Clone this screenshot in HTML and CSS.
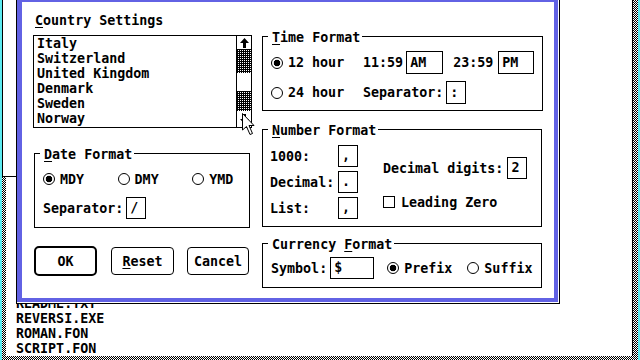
FILE: index.html
```html
<!DOCTYPE html>
<html lang="en">
<head>
    <meta charset="UTF-8">
    <title>Country Settings</title>
    <link rel="stylesheet" href="styles.css">
</head>
<body>
<div class="desktop">
    <div class="exec-window dither">
        <div class="exec-body">
            <div>README.TXT</div>
            <div>REVERSI.EXE</div>
            <div>ROMAN.FON</div>
            <div>SCRIPT.FON</div>
        </div>
    </div>
    <div class="side-window"></div>

    <div class="dialog">
        <div class="dialog-frame">
            <div class="dialog-body">
                <div class="col-left">
                    <div class="dialog-title"><u>C</u>ountry Settings</div>
                    <div class="listbox">
                        <div class="list-items">
                            <div>Italy</div>
                            <div>Switzerland</div>
                            <div>United Kingdom</div>
                            <div>Denmark</div>
                            <div>Sweden</div>
                            <div>Norway</div>
                        </div>
                        <div class="scrollbar">
                            <div class="sb-btn sb-up">
                                <svg width="9" height="10" viewBox="0 0 9 10"><polygon points="4.5,0 9,5 6,5 6,10 3,10 3,5 0,5"/></svg>
                            </div>
                            <div class="sb-track sb-track-top"></div>
                            <div class="sb-thumb"></div>
                            <div class="sb-track sb-track-bottom"></div>
                            <div class="sb-btn sb-down">
                                <svg width="9" height="10" viewBox="0 0 9 10"><polygon points="4.5,10 9,5 6,5 6,0 3,0 3,5 0,5"/></svg>
                            </div>
                        </div>
                    </div>

                    <div class="group date-group">
                        <div class="group-title"><u>D</u>ate Format</div>
                        <div class="group-body">
                            <div class="row date-order">
                                <div class="option"><span class="radio checked"></span>MDY</div>
                                <div class="option"><span class="radio"></span>DMY</div>
                                <div class="option"><span class="radio"></span>YMD</div>
                            </div>
                            <div class="row">
                                <span class="label">Separator:</span>
                                <span class="edit edit-char">/</span>
                            </div>
                        </div>
                    </div>

                    <div class="buttons">
                        <button class="btn btn-default">OK</button>
                        <button class="btn btn-reset"><u>R</u>eset</button>
                        <button class="btn btn-cancel">Cancel</button>
                    </div>
                </div>

                <div class="col-right">
                    <div class="group time-group">
                        <div class="group-title"><u>T</u>ime Format</div>
                        <div class="group-body">
                            <div class="row">
                                <div class="option time-opt"><span class="radio checked"></span>12 hour</div>
                                <span class="label">11:59</span>
                                <span class="edit edit-ampm">AM</span>
                                <span class="label time-24">23:59</span>
                                <span class="edit edit-ampm pm">PM</span>
                            </div>
                            <div class="row">
                                <div class="option time-opt"><span class="radio"></span>24 hour</div>
                                <span class="label">Separator:</span>
                                <span class="edit edit-char">:</span>
                            </div>
                        </div>
                    </div>

                    <div class="group number-group">
                        <div class="group-title"><u>N</u>umber Format</div>
                        <div class="group-body">
                            <div class="number-left">
                                <div class="row"><span class="label num-label">1000:</span><span class="edit edit-char">,</span></div>
                                <div class="row"><span class="label num-label">Decimal:</span><span class="edit edit-char">.</span></div>
                                <div class="row"><span class="label num-label">List:</span><span class="edit edit-char">,</span></div>
                            </div>
                            <div class="number-right">
                                <div class="row"><span class="label">Decimal digits:</span><span class="edit edit-char">2</span></div>
                                <div class="row"><span class="checkbox"></span>Leading Zero</div>
                            </div>
                        </div>
                    </div>

                    <div class="group currency-group">
                        <div class="group-title">Currency <u>F</u>ormat</div>
                        <div class="group-body">
                            <div class="row">
                                <span class="label">Symbol:</span>
                                <span class="edit edit-symbol">$</span>
                                <div class="option prefix"><span class="radio checked"></span>Prefix</div>
                                <div class="option"><span class="radio"></span>Suffix</div>
                            </div>
                        </div>
                    </div>
                </div>
            </div>
        </div>
    </div>

    <svg class="cursor" width="14" height="23" viewBox="0 0 14 23">
        <polygon points="0.5,0.5 0.5,17 4.5,13.5 8,21.5 10.5,20.5 7,12.5 12,12.5" fill="#fff" stroke="#000" stroke-width="1"/>
    </svg>
</div>
</body>
</html>
```

FILE: styles.css
```css
body {
    margin: 0;
}

.desktop {
    position: relative;
    width: 640px;
    height: 360px;
    overflow: hidden;
    background: #5ceaf0;
    color: #000;
    font: bold 13.33px/15px "DejaVu Sans Mono", monospace;
}

u {
    text-decoration-thickness: 1px;
    text-underline-offset: 2px;
}

/* 1px black/white checker, the old gray: column stripes xor row stripes */
.dither {
    background-color: #fff;
    background-image: linear-gradient(90deg, #000 1px, #fff 1px), linear-gradient(#000 1px, #fff 1px);
    background-size: 2px 2px;
    background-blend-mode: difference;
}

/* background window */
.exec-window {
    position: absolute;
    left: 2px;
    top: 0;
    width: 636px;
    height: 360px;
    box-sizing: border-box;
    padding: 0 5px 4px 4px;
}

.exec-body {
    height: 100%;
    background: #fff;
    border-right: 1px solid #000;
    display: flex;
    flex-direction: column;
    justify-content: flex-end;
    padding-left: 10px;
}

.side-window {
    position: absolute;
    left: 2px;
    top: 0;
    width: 14px;
    height: 177px;
    box-sizing: border-box;
    background: #fff;
    border-left: 1px solid #000;
    border-bottom: 1px solid #000;
}

/* dialog */
.dialog {
    position: absolute;
    left: 16px;
    top: -3px;
    width: 544px;
    height: 307px;
    box-sizing: border-box;
    border: 1px solid #000;
    padding: 0 1px 1px 0;
    background: #fff;
}

.dialog-frame {
    height: 100%;
    box-sizing: border-box;
    border-style: solid;
    border-color: #6262e4;
    border-width: 4px 4px 4px 5px;
    background: #fff;
}

.dialog-body {
    display: grid;
    grid-template-columns: 219px 281px;
    column-gap: 10px;
    padding-left: 11px;
}

.col-left {
    display: flex;
    flex-direction: column;
    padding-top: 11px;
}

.col-right {
    display: flex;
    flex-direction: column;
    padding-top: 34px;
}

.dialog-title {
    padding-left: 2px;
}

/* list box */
.listbox {
    margin-top: 7px;
    height: 93px;
    box-sizing: border-box;
    border: 1px solid #000;
    display: flex;
}

.list-items {
    flex: 1;
    padding-left: 3px;
}

.scrollbar {
    width: 14px;
    border-left: 1px solid #000;
    display: flex;
    flex-direction: column;
}

.sb-btn {
    display: flex;
    justify-content: center;
    align-items: center;
    background: #fff;
}

.sb-up {
    height: 13px;
}

.sb-down {
    height: 15px;
}

/* darker gray: one white dot in each 2x2 */
.sb-track {
    background-color: #fff;
    background-image: linear-gradient(90deg, #000 1px, #fff 1px), linear-gradient(#000 1px, #fff 1px);
    background-size: 2px 2px;
    background-blend-mode: multiply;
}

.sb-track-top {
    height: 24px;
}

.sb-thumb {
    height: 18px;
    background: #fff;
}

.sb-track-bottom {
    height: 20px;
}

/* group boxes */
.group {
    border: 1px solid #000;
    box-sizing: border-box;
}

.group-title {
    width: fit-content;
    margin: -5px 0 -6px 5px;
    padding: 0 2px 0 4px;
    line-height: 11px;
    background: #fff;
    position: relative;
}

.group-body {
    display: flex;
    flex-direction: column;
    gap: 7px;
}

.row {
    display: flex;
    align-items: center;
    height: 22px;
}

.label {
    white-space: pre;
}

.option {
    display: flex;
    align-items: center;
}

.radio {
    width: 12px;
    height: 12px;
    box-sizing: border-box;
    border: 1px solid #000;
    border-radius: 50%;
    margin-right: 5px;
}

.radio.checked {
    background: radial-gradient(circle, #000 0 3px, #fff 3.6px);
}

.checkbox {
    width: 12px;
    height: 12px;
    box-sizing: border-box;
    border: 1px solid #000;
    margin-right: 6px;
}

.edit {
    height: 22px;
    box-sizing: border-box;
    border: 1px solid #000;
    padding-left: 3px;
    line-height: 20px;
    margin-left: 3px;
}

.edit-char {
    width: 20px;
}

.edit-ampm {
    width: 37px;
}

.edit-ampm.pm {
    width: 36px;
}

.edit-symbol {
    width: 44px;
    margin-right: 13px;
}

/* date format */
.date-group {
    margin: 25px 0 0 1px;
    width: 216px;
    height: 75px;
}

.date-group .group-body {
    padding: 14px 0 8px 8px;
}

.date-order {
    gap: 33.5px;
}

/* time format */
.time-group {
    height: 75px;
}

.time-group .group-body {
    padding: 14px 0 6px 8px;
}

.time-group .row {
    height: 23px;
}

.time-group .edit {
    height: 23px;
    line-height: 21px;
}

.time-opt {
    width: 92px;
}

.time-24 {
    margin: 0 2px 0 10px;
}

/* number format */
.number-group {
    margin-top: 18px;
    width: 280px;
    height: 98px;
}

.number-group .group-body {
    flex-direction: row;
    gap: 0;
    padding: 15px 0 7px 7px;
}

.number-left {
    display: flex;
    flex-direction: column;
    gap: 4px;
}

.num-label {
    width: 65px;
}

.number-right {
    display: flex;
    flex-direction: column;
    gap: 12px;
    padding: 12px 0 0 25px;
}

.number-right .edit {
    margin-left: 4px;
}

/* currency format */
.currency-group {
    margin-top: 16px;
    width: 280px;
    height: 45px;
}

.currency-group .group-body {
    padding: 13px 0 8px 8px;
}

.prefix {
    margin-right: 15px;
}

/* push buttons */
.buttons {
    margin-top: 18px;
    padding-left: 1px;
    display: flex;
    align-items: center;
    height: 30px;
}

.btn {
    font: inherit;
    color: #000;
    background: #fff;
    padding: 0;
    height: 28px;
    box-sizing: border-box;
    border: 1px solid #000;
    border-radius: 4px;
    display: flex;
    justify-content: center;
    align-items: center;
}

.btn-default {
    width: 63px;
    height: 30px;
    border-width: 2px;
    border-radius: 5px;
}

.btn-reset {
    width: 63px;
    margin-left: 14px;
}

.btn-cancel {
    width: 62px;
    margin-left: 13px;
}

.cursor {
    position: absolute;
    left: 242px;
    top: 113px;
}
```
